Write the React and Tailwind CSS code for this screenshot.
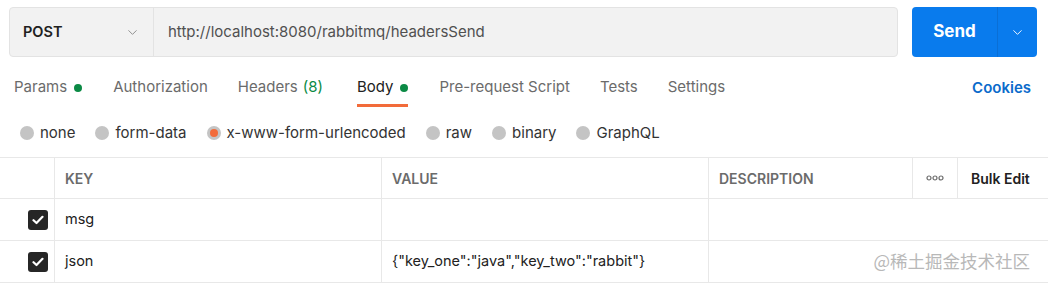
import { ChevronDown } from 'lucide-react'

const tabs = [
  { label: 'Params', dot: true, extra: 'mr-[1px]' },
  { label: 'Authorization' },
  { label: 'Headers', count: '(8)', extra: 'mr-[4px]' },
  { label: 'Body', dot: true, active: true, extra: 'mr-[1px]' },
  { label: 'Pre-request Script' },
  { label: 'Tests' },
  { label: 'Settings' },
]

const bodyTypes = [
  { label: 'none' },
  { label: 'form-data' },
  { label: 'x-www-form-urlencoded', checked: true },
  { label: 'raw' },
  { label: 'binary' },
  { label: 'GraphQL' },
]

const rows = [
  { key: 'msg', value: '' },
  { key: 'json', value: '{"key_one":"java","key_two":"rabbit"}' },
]

function Checkbox() {
  return (
    <div className="w-5 h-5 rounded-[3px] bg-[#262626] flex items-center justify-center">
      <svg width="12" height="10" viewBox="0 0 12 10" fill="none">
        <path d="M1.5 5.2 4.5 8 10.5 1.8" stroke="#fff" strokeWidth="2.2" strokeLinecap="round" strokeLinejoin="round" />
      </svg>
    </div>
  )
}

export default function App() {
  return (
    <div className="relative w-[1048px] h-[284px] bg-white overflow-hidden font-['Inter',sans-serif] text-[#212121]">

      {/* URL bar */}
      <div className="flex pt-[7px] pl-[9px] gap-[14px]">
        <div className="flex w-[889px] h-[50px] rounded-[4px] border border-[#e3e3e3] bg-[#f2f2f2]">
          <div className="w-[144px] flex items-center justify-between pl-[13px] pr-[13px] border-r border-[#e3e3e3]">
            <span className="text-[14.5px] font-semibold">POST</span>
            <ChevronDown size={15} strokeWidth={1.5} className="text-[#8a8a8a]" />
          </div>
          <div className="flex items-center pl-[14px] text-[15px] text-[#505050]">
            http://localhost:8080/rabbitmq/headersSend
          </div>
        </div>
        <div className="flex w-[125px] h-[50px] rounded-[4px] bg-[#097bed] text-white">
          <div className="w-[85px] flex items-center justify-center text-[17px] font-bold">Send</div>
          <div className="flex-1 flex items-center justify-center border-l border-[#0a6fd6]">
            <ChevronDown size={15} strokeWidth={1.5} />
          </div>
        </div>
      </div>

      {/* Tabs */}
      <div className="flex items-start mt-[15px] pl-[14px] pr-[17px] gap-[30px] text-[15px]">
        {tabs.map(t => (
          <div
            key={t.label}
            className={`h-[35px] flex items-center gap-[7px] pb-[1px] border-b-[3px] ${t.extra || ''} ${t.active ? 'border-[#f26b3a] text-[#212121]' : 'border-transparent text-[#6b6b6b]'}`}
          >
            <span>{t.label}</span>
            {t.count && <span className="text-[#0b8a45] -ml-[2px]">{t.count}</span>}
            {t.dot && <span className="w-[8px] h-[8px] rounded-full bg-[#0b8a45]" />}
          </div>
        ))}
        <div className="ml-auto h-[32px] flex items-center text-[#0b6bcb] font-semibold">Cookies</div>
      </div>

      {/* Body types */}
      <div className="flex items-center h-[50px] pt-[2px] pl-[20px] gap-[20px] text-[15px] text-[#333]">
        {bodyTypes.map(b => (
          <div key={b.label} className="flex items-center gap-[6px]">
            <span className="w-[14px] h-[14px] rounded-full bg-[#c4c4c4] flex items-center justify-center">
              {b.checked && <span className="w-[8px] h-[8px] rounded-full bg-[#f26b3a]" />}
            </span>
            <span>{b.label}</span>
          </div>
        ))}
      </div>

      {/* Table */}
      <div className="border-t border-[#e8e8e8] text-[14.5px]">
        <div className="flex h-[41px] border-b border-[#e8e8e8] font-semibold text-[#6b6b6b] text-[14px]">
          <div className="w-[55px] border-r border-[#e8e8e8]" />
          <div className="w-[327px] border-r border-[#e8e8e8] flex items-center pl-[10px]">KEY</div>
          <div className="w-[327px] border-r border-[#e8e8e8] flex items-center pl-[10px]">VALUE</div>
          <div className="w-[204px] border-r border-[#e8e8e8] flex items-center pl-[10px]">DESCRIPTION</div>
          <div className="w-[45px] border-r border-[#e8e8e8] flex items-center justify-center">
            <svg width="18" height="6" viewBox="0 0 18 6" fill="none" stroke="#6b6b6b" strokeWidth="1.2">
              <circle cx="3" cy="3" r="2" />
              <circle cx="9" cy="3" r="2" />
              <circle cx="15" cy="3" r="2" />
            </svg>
          </div>
          <div className="flex-1 flex items-center pl-[13px] text-[#212121]">Bulk Edit</div>
        </div>
        {rows.map(r => (
          <div key={r.key} className="flex h-[42px] border-b border-[#e8e8e8]">
            <div className="w-[55px] border-r border-[#e8e8e8] flex items-center pl-[28px]">
              <Checkbox />
            </div>
            <div className="w-[327px] border-r border-[#e8e8e8] flex items-center pl-[10px] pb-[2px]">{r.key}</div>
            <div className="w-[327px] border-r border-[#e8e8e8] flex items-center pl-[10px] pb-[2px]">{r.value}</div>
            <div className="flex-1" />
          </div>
        ))}
      </div>

      {/* watermark */}
      <div className="absolute right-[18px] top-[248px] text-[17.5px] text-[#b8b8b8] font-['Noto_Sans_CJK_SC',sans-serif]">
        @稀土掘金技术社区
      </div>
    </div>
  )
}
